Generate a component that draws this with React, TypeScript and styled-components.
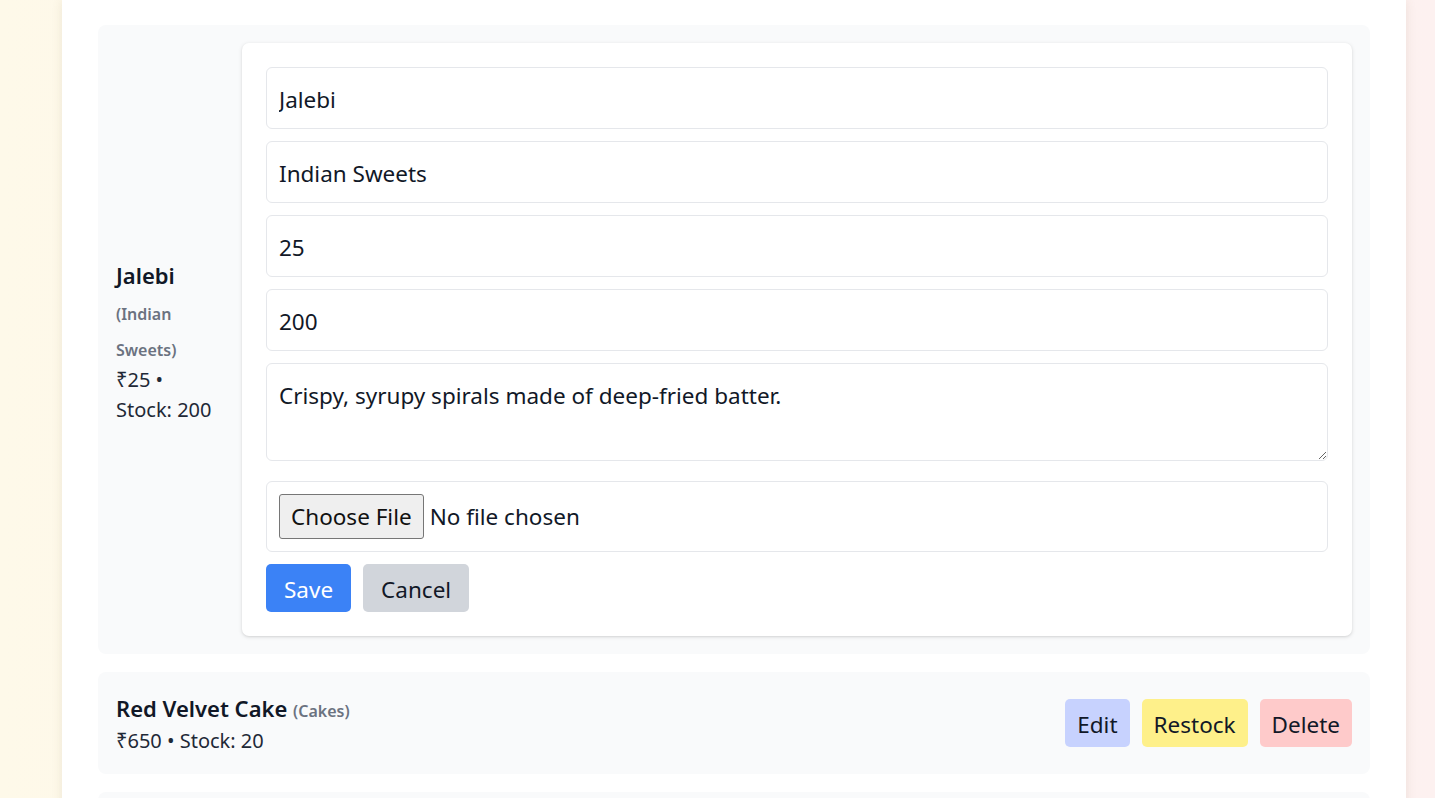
import React from "react";
import styled, { createGlobalStyle } from "styled-components";

const GlobalStyle = createGlobalStyle`
  html, body { margin: 0; padding: 0; }
  body {
    font-family: "Noto Sans", "Open Sans", sans-serif;
    background: linear-gradient(90deg, #fef9e9 0%, #fdf5ec 50%, #fdf1f0 100%);
    color: #111827;
  }
  * { box-sizing: border-box; }
`;

const Page = styled.div`
  height: 798px;
  overflow: hidden;
  padding-left: 62px;
`;

const Container = styled.main`
  width: 1344px;
  min-height: 798px;
  background: #ffffff;
  box-shadow: 0 0 10px rgba(120, 100, 60, 0.12);
  padding: 25px 36px 0;
  display: flex;
  flex-direction: column;
  gap: 18px;
`;

const ItemCard = styled.div`
  background: #f9fafb;
  border-radius: 8px;
  padding: 18px;
  display: flex;
  align-items: center;
  gap: 18px;
`;

const Info = styled.div<{ $narrow?: boolean }>`
  ${(p) => (p.$narrow ? "width: 108px; flex-shrink: 0; padding-top: 3px;" : "flex: 1;")}
`;

const Name = styled.h3`
  margin: 0;
  font-size: 22px;
  font-weight: 600;
  line-height: 36px;
  color: #111827;
`;

const Category = styled.span`
  font-size: 16px;
  font-weight: 600;
  line-height: 1;
  color: #6b7280;
`;

const Meta = styled.p`
  margin: 0;
  font-size: 20px;
  line-height: 30px;
  color: #1f2937;
`;

const FormCard = styled.form`
  flex: 1;
  background: #ffffff;
  border-radius: 7px;
  box-shadow: 0 1px 4px rgba(0, 0, 0, 0.12), 0 1px 2px rgba(0, 0, 0, 0.06);
  padding: 24px;
  display: flex;
  flex-direction: column;
  gap: 12px;
`;

const fieldBase = `
  width: 100%;
  border: 1px solid #e5e7eb;
  border-radius: 6px;
  background: #fff;
  font-family: "Noto Sans", "Open Sans", sans-serif;
  font-size: 22.5px;
  color: #111827;
  padding: 12px;
  outline: none;
`;

const TextInput = styled.input`
  ${fieldBase}
  height: 62px;
  line-height: 36px;
  padding-top: 13px;
  padding-bottom: 11px;
`;

const TextArea = styled.textarea`
  ${fieldBase}
  display: block;
  height: 98px;
  line-height: 32px;
  padding-top: 16px;
  margin-bottom: 8px;
  resize: vertical;
`;

const FileInput = styled.input`
  ${fieldBase}
  height: 71px;
  padding: 12px;
  &::file-selector-button {
    font-family: "Noto Sans", "Open Sans", sans-serif;
    font-size: 22.5px;
    height: 45px;
    padding: 0 11px;
    margin-right: 6px;
    background: #efefef;
    border: 1px solid #767676;
    border-radius: 3px;
    color: #111;
  }
`;

const Actions = styled.div`
  display: flex;
  gap: 12px;
`;

const tones: Record<string, { bg: string; fg: string }> = {
  primary: { bg: "#3b82f6", fg: "#ffffff" },
  gray: { bg: "#d1d5db", fg: "#111827" },
  indigo: { bg: "#c7d2fe", fg: "#111827" },
  yellow: { bg: "#fef08a", fg: "#111827" },
  red: { bg: "#fecaca", fg: "#111827" },
};

const Button = styled.button<{ $tone: string; $pad?: number }>`
  height: 48px;
  padding: 2px ${(p) => p.$pad ?? 12}px 0;
  border: none;
  border-radius: 5px;
  font-family: "Noto Sans", "Open Sans", sans-serif;
  font-size: 22.5px;
  background: ${(p) => tones[p.$tone].bg};
  color: ${(p) => tones[p.$tone].fg};
  cursor: pointer;
`;

const ButtonRow = styled.div`
  display: flex;
  gap: 12px;
  margin-left: auto;
`;

type Item = { name: string; category: string; price: number; stock: number };

const items: Item[] = [
  { name: "Red Velvet Cake", category: "Cakes", price: 650, stock: 20 },
  { name: "Gulab Jamun", category: "Indian Sweets", price: 30, stock: 150 },
];

export default function App() {
  return (
    <>
      <GlobalStyle />
      <Page>
        <Container>
          <ItemCard>
            <Info $narrow>
              <Name>
                Jalebi <Category>(Indian Sweets)</Category>
              </Name>
              <Meta>₹25 • Stock: 200</Meta>
            </Info>
            <FormCard onSubmit={(e) => e.preventDefault()}>
              <TextInput defaultValue="Jalebi" />
              <TextInput defaultValue="Indian Sweets" />
              <TextInput defaultValue="25" />
              <TextInput defaultValue="200" />
              <TextArea defaultValue="Crispy, syrupy spirals made of deep-fried batter." />
              <FileInput type="file" />
              <Actions>
                <Button $tone="primary" $pad={18}>Save</Button>
                <Button $tone="gray" $pad={18} type="button">Cancel</Button>
              </Actions>
            </FormCard>
          </ItemCard>
          {items.map((it) => (
            <ItemCard key={it.name}>
              <Info>
                <Name>
                  {it.name} <Category>({it.category})</Category>
                </Name>
                <Meta>₹{it.price} • Stock: {it.stock}</Meta>
              </Info>
              <ButtonRow>
                <Button $tone="indigo">Edit</Button>
                <Button $tone="yellow">Restock</Button>
                <Button $tone="red">Delete</Button>
              </ButtonRow>
            </ItemCard>
          ))}
        </Container>
      </Page>
    </>
  );
}
